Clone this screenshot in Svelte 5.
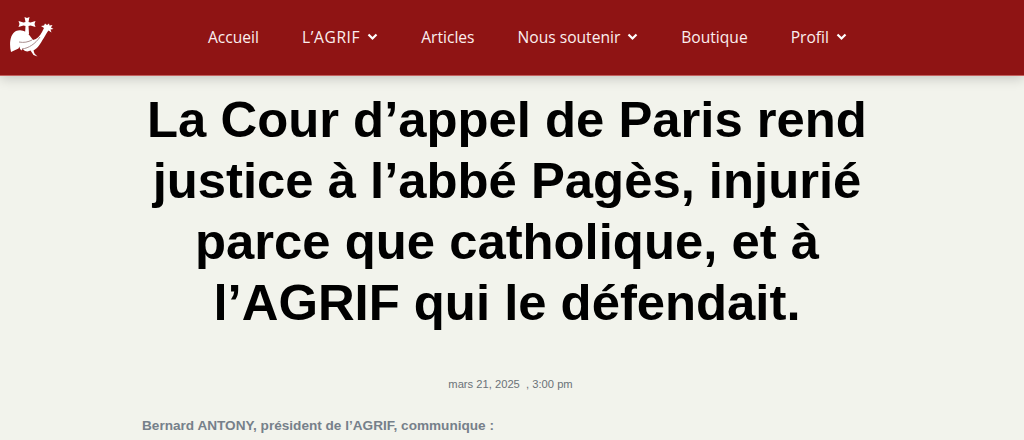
<script>
  const links = [
    { label: "Accueil" },
    { label: "L’AGRIF", caret: true, caps: true },
    { label: "Articles" },
    { label: "Nous soutenir", caret: true },
    { label: "Boutique" },
    { label: "Profil", caret: true }
  ];
</script>

<header>
  <a class="logo" href="/" aria-label="AGRIF">
    <svg width="44" height="44" viewBox="0 0 44 44">
      <!-- cross -->
      <path d="M14.5 1l2.5 1 2.500-1-1 5 2 .5 5-1.500-1 3 1 3-5-1.500-2 .5 .5 8h-4l.5-8-2-.5-5 1.500 1-3-1-3 5 1.500 2-.5z" fill="#fff" />
      <!-- rooster -->
      <path
        d="M1 36C-1 28 0 18 6 15c5-2 11 0 14 5l3 4c4-1 7-4 9-8l2-4-3-2 3-.5 1-2 2 1.500 2-1.500 .5 2 3-.5-1.500 2.500 2.500 1.500-3 .5 1 3-3-2c-2 2-3 5-5 8-3 5-6 10-10 12l1 3 3 3-4-1.500-3-4.500-3 1c-2 0-4-1-5-3l-1 2c-1-1-2-2-2-4l-1 2z"
        fill="#fff"
      />
      <path d="M12 33c7-1 13-5 18-12M9 26c5 1 9 0 13-2" stroke="#a98f8f" stroke-width="1" fill="none" />
    </svg>
  </a>
  <nav>
    <ul>
      {#each links as link}
        <li>
          <a href="/" class:caps={link.caps}>{link.label}</a>
          {#if link.caret}
            <svg class="caret" width="11" height="8" viewBox="0 0 11 8">
              <path d="M1.500 1.500l4 4 4-4" stroke="#fff" stroke-width="2.200" fill="none" />
            </svg>
          {/if}
        </li>
      {/each}
    </ul>
  </nav>
</header>

<main>
  <h1>La Cour d’appel de Paris rend justice à l’abbé Pagès, injurié parce que catholique, et à l’AGRIF qui le défendait.</h1>
  <p class="date">mars 21, 2025 &nbsp;, 3:00 pm</p>
  <p class="lead">Bernard ANTONY, président de l’AGRIF, communique :</p>
</main>

<style>
  :global(body) {
    background: #f2f3ec;
    overflow: hidden;
  }

  header {
    box-sizing: border-box;
    height: 76px;
    background: #8f1414;
    border-bottom: 1px solid #c4605e;
    display: flex;
    align-items: center;
    padding-left: 10px;
    box-shadow: 0 2px 12px rgba(0, 0, 0, 0.2);
    position: relative;
  }

  .logo {
    display: flex;
  }

  nav {
    margin-left: 154px;
    margin-top: -2px;
  }

  ul {
    margin: 0;
    padding: 0;
    display: flex;
    gap: 43px;
    list-style-type: none;
  }

  li {
    display: flex;
    align-items: center;
    gap: 7px;
  }

  li a {
    color: #fbeeee;
    text-decoration: none;
    font: 500 15.6px "Open Sans", sans-serif;
  }

  li a.caps {
    letter-spacing: 0.6px;
  }

  main {
    width: 740px;
    margin: 0 auto;
    padding: 13px 10px 0 0;
    text-align: center;
    font-family: "Liberation Sans", Arial, sans-serif;
  }

  h1 {
    margin: 0;
    font-size: 50.8px;
    line-height: 61px;
    font-weight: 700;
    color: #000;
  }

  .date {
    margin: 43px 0 0;
    padding-left: 7px;
    font-size: 11.2px;
    line-height: 16px;
    color: #6b7278;
  }

  .lead {
    margin: 25px 0 0 5px;
    text-align: left;
    font-size: 13.6px;
    line-height: 18px;
    font-weight: 700;
    color: #76808a;
  }
</style>
